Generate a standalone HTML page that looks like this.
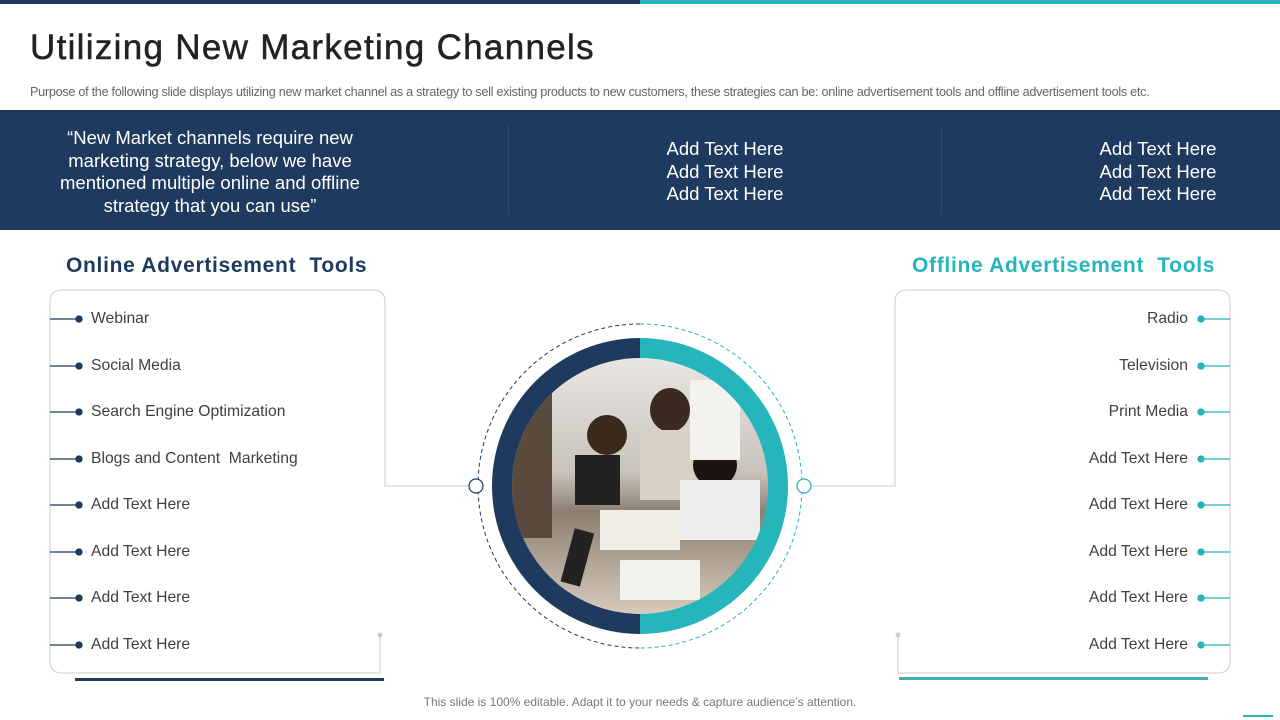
<!DOCTYPE html>
<html><head><meta charset="utf-8"><style>
*{margin:0;padding:0;box-sizing:border-box}
body{width:1280px;height:720px;overflow:hidden;background:#fff;font-family:"Liberation Sans",sans-serif;position:relative}
.a{position:absolute;white-space:nowrap}
.t{font-size:15.7px;color:#404040;line-height:20px;top:0}
</style></head><body>
<div class="a" style="left:0;top:0;width:640px;height:4px;background:#1f3a5f"></div>
<div class="a" style="left:640px;top:0;width:640px;height:4px;background:#25b5bb"></div>
<div class="a" style="left:30px;top:26px;font-size:35px;color:#222;letter-spacing:1.3px;line-height:44px;-webkit-text-stroke:0.5px #222">Utilizing New Marketing Channels</div>
<div class="a" style="left:30px;top:85px;font-size:12.7px;color:#666;letter-spacing:-0.3px">Purpose of the following slide displays utilizing new market channel as a strategy to sell existing products to new customers, these strategies can be: online advertisement tools and offline advertisement tools etc.</div>
<div class="a" style="left:0;top:110px;width:1280px;height:120px;background:#1f3a5f"></div>
<div class="a" style="left:508px;top:125px;width:1px;height:90px;background:#2f4a6e"></div>
<div class="a" style="left:941px;top:125px;width:1px;height:90px;background:#2f4a6e"></div>
<div class="a" style="left:50px;top:127px;width:320px;text-align:center;color:#fff;font-size:18.5px;line-height:22.5px;white-space:normal">“New Market channels require new marketing strategy, below we have mentioned multiple online and offline strategy that you can use”</div>
<div class="a" style="left:575px;top:138px;width:300px;text-align:center;color:#fff;font-size:18.5px;line-height:22.5px">Add Text Here<br>Add Text Here<br>Add Text Here</div>
<div class="a" style="left:1008px;top:138px;width:300px;text-align:center;color:#fff;font-size:18.5px;line-height:22.5px">Add Text Here<br>Add Text Here<br>Add Text Here</div>
<div class="a" style="left:66px;top:254px;font-size:21px;font-weight:bold;color:#1f3a5f;letter-spacing:0.7px">Online Advertisement&nbsp; Tools</div>
<div class="a" style="left:912px;top:254px;font-size:21px;font-weight:bold;color:#25b5bb;letter-spacing:0.7px">Offline Advertisement&nbsp; Tools</div>
<svg class="a" style="left:0;top:0" width="1280" height="720">
<defs>
<linearGradient id="g" x1="0" y1="0" x2="0" y2="1"><stop offset="0" stop-color="#e8e6e3"/><stop offset="0.45" stop-color="#c8c2ba"/><stop offset="0.6" stop-color="#8c7f72"/><stop offset="1" stop-color="#d6cbbd"/></linearGradient>
<clipPath id="c"><circle cx="640" cy="486" r="128"/></clipPath>
</defs>
<g fill="none" stroke="#d6d6d6" stroke-width="1.2">
<path d="M50 302 Q50 290 62 290 L373 290 Q385 290 385 302 L385 486 L469 486"/>
<path d="M50 302 L50 661 Q50 673 62 673 L380 673 L380 635"/>
<path d="M1230 302 Q1230 290 1218 290 L907 290 Q895 290 895 302 L895 486 L811 486"/>
<path d="M1230 302 L1230 661 Q1230 673 1218 673 L898 673 L898 635"/>
</g>
<circle cx="380" cy="635" r="2.5" fill="#ccc"/><circle cx="898" cy="635" r="2.5" fill="#ccc"/>
<rect x="75" y="678" width="309" height="3" fill="#1f3a5f"/>
<rect x="899" y="677" width="309" height="3" fill="#3fb0b0"/>
<rect x="1243" y="715" width="30" height="2" fill="#25b5bb"/>
<path d="M640 324 A162 162 0 0 0 640 648" fill="none" stroke="#1f3a5f" stroke-width="1" stroke-dasharray="4 3"/>
<path d="M640 324 A162 162 0 0 1 640 648" fill="none" stroke="#25b5bb" stroke-width="1" stroke-dasharray="4 3"/>
<path d="M640 338 A148 148 0 0 0 640 634 Z" fill="#1f3a5f"/>
<path d="M640 338 A148 148 0 0 1 640 634 Z" fill="#25b5bb"/>
<g clip-path="url(#c)">
<rect x="512" y="358" width="256" height="256" fill="url(#g)"/>
<rect x="512" y="358" width="40" height="180" fill="#5a4a3e"/>
<rect x="575" y="455" width="45" height="50" fill="#222"/>
<ellipse cx="607" cy="435" rx="20" ry="20" fill="#3a2a1e"/>
<ellipse cx="670" cy="410" rx="20" ry="22" fill="#3b2a20"/>
<rect x="640" y="430" width="60" height="70" fill="#d9cfc2"/>
<ellipse cx="715" cy="465" rx="22" ry="22" fill="#1c1410"/>
<rect x="680" y="480" width="80" height="60" fill="#eee"/>
<rect x="600" y="510" width="80" height="40" fill="#f0ece6"/>
<rect x="568" y="530" width="20" height="55" fill="#222" transform="rotate(15 578 555)"/>
<rect x="620" y="560" width="80" height="40" fill="#f3f1ec"/>
<rect x="690" y="380" width="50" height="80" fill="#f4f2ef"/>
</g>
<circle cx="476" cy="486" r="7" fill="#fff" stroke="#1f3a5f" stroke-width="1.2"/>
<circle cx="804" cy="486" r="7" fill="#fff" stroke="#25b5bb" stroke-width="1.2"/>
<g stroke="#1f3a5f" stroke-width="1.3" fill="#1f3a5f">
<line x1="50" y1="319" x2="79" y2="319"/><circle cx="79" cy="319" r="3"/>
<line x1="50" y1="366" x2="79" y2="366"/><circle cx="79" cy="366" r="3"/>
<line x1="50" y1="412" x2="79" y2="412"/><circle cx="79" cy="412" r="3"/>
<line x1="50" y1="459" x2="79" y2="459"/><circle cx="79" cy="459" r="3"/>
<line x1="50" y1="505" x2="79" y2="505"/><circle cx="79" cy="505" r="3"/>
<line x1="50" y1="552" x2="79" y2="552"/><circle cx="79" cy="552" r="3"/>
<line x1="50" y1="598" x2="79" y2="598"/><circle cx="79" cy="598" r="3"/>
<line x1="50" y1="645" x2="79" y2="645"/><circle cx="79" cy="645" r="3"/>
</g>
<g stroke="#25b5bb" stroke-width="1.3" fill="#25b5bb">
<line x1="1201" y1="319" x2="1230" y2="319"/><circle cx="1201" cy="319" r="3"/>
<line x1="1201" y1="366" x2="1230" y2="366"/><circle cx="1201" cy="366" r="3"/>
<line x1="1201" y1="412" x2="1230" y2="412"/><circle cx="1201" cy="412" r="3"/>
<line x1="1201" y1="459" x2="1230" y2="459"/><circle cx="1201" cy="459" r="3"/>
<line x1="1201" y1="505" x2="1230" y2="505"/><circle cx="1201" cy="505" r="3"/>
<line x1="1201" y1="552" x2="1230" y2="552"/><circle cx="1201" cy="552" r="3"/>
<line x1="1201" y1="598" x2="1230" y2="598"/><circle cx="1201" cy="598" r="3"/>
<line x1="1201" y1="645" x2="1230" y2="645"/><circle cx="1201" cy="645" r="3"/>
</g>
</svg>
<div class="a t" style="left:91px;top:309px">Webinar</div>
<div class="a t" style="left:91px;top:356px">Social Media</div>
<div class="a t" style="left:91px;top:402px">Search Engine Optimization</div>
<div class="a t" style="left:91px;top:449px">Blogs and Content&nbsp; Marketing</div>
<div class="a t" style="left:91px;top:495px">Add Text Here</div>
<div class="a t" style="left:91px;top:542px">Add Text Here</div>
<div class="a t" style="left:91px;top:588px">Add Text Here</div>
<div class="a t" style="left:91px;top:635px">Add Text Here</div>
<div class="a t" style="right:92px;top:309px">Radio</div>
<div class="a t" style="right:92px;top:356px">Television</div>
<div class="a t" style="right:92px;top:402px">Print Media</div>
<div class="a t" style="right:92px;top:449px">Add Text Here</div>
<div class="a t" style="right:92px;top:495px">Add Text Here</div>
<div class="a t" style="right:92px;top:542px">Add Text Here</div>
<div class="a t" style="right:92px;top:588px">Add Text Here</div>
<div class="a t" style="right:92px;top:635px">Add Text Here</div>
<div class="a" style="left:0;width:1280px;text-align:center;top:695px;font-size:12px;color:#777">This slide is 100% editable. Adapt it to your needs &amp; capture audience’s attention.</div>
</body></html>
